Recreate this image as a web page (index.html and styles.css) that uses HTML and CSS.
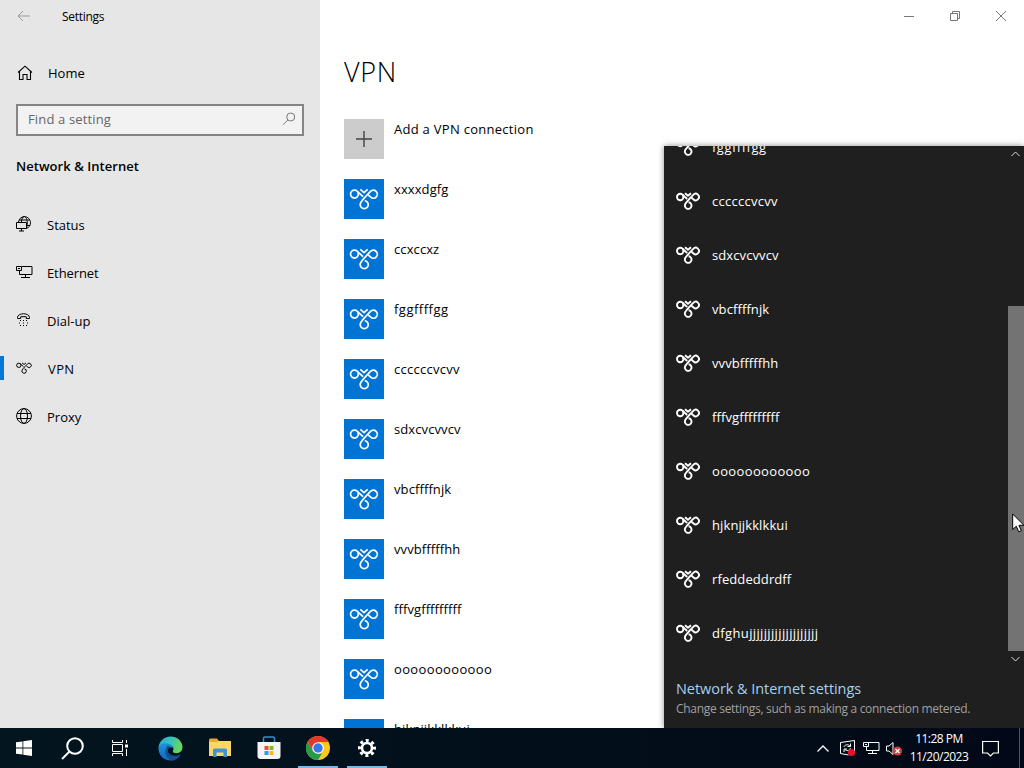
FILE: index.html
```
<!DOCTYPE html>
<html lang="en">
<head>
    <meta charset="UTF-8">
    <meta name="viewport" content="width=device-width, initial-scale=1.0">
    <title>Settings - VPN</title>
    <link rel="stylesheet" href="styles.css">
</head>
<body>
    <svg class="sprite" width="0" height="0">
        <symbol id="vpn" viewBox="0 0 24 18">
            <g fill="none" stroke="currentColor">
                <circle cx="4.2" cy="5" r="3.2"/>
                <path d="M6.500 2.700L11.200 7M9 1.200l3 2.600 3-2.600"/>
                <path d="M12.600 10.300a3.300 3.300 0 1 1-3.200 1.500C10.800 9.500 15 5.200 17.300 2.800a3.250 3.250 0 1 1 .2 4.700l-1.900-1.700"/>
            </g>
        </symbol>
        <symbol id="ethernet" viewBox="0 0 17 16">
            <path fill="none" stroke="currentColor" d="M5.500 2.500h10.500v8H3.500V6M9.500 10.500v3M5 13.500h9M.500 2.500h5v4h-5zM2 4.500h2"/>
        </symbol>
    </svg>

    <div class="desktop">
        <div class="settings">
            <aside class="sidebar">
                <div class="titlebar">
                    <svg width="14" height="12" viewBox="0 0 14 12" fill="none" stroke="#999"><path d="M13 6H1M6 1L1 6l5 5"/></svg>
                    <span class="title">Settings</span>
                </div>
                <a class="home">
                    <svg width="16" height="16" viewBox="0 0 16 16" fill="none" stroke="#000" stroke-width="1.1"><path d="M1 7.500L8 1.200l7 6.300M2.500 6.500v8H6V9.500h4v5h3.500v-8"/></svg>
                    <span>Home</span>
                </a>
                <div class="search">
                    <span>Find a setting</span>
                    <svg width="14" height="14" viewBox="0 0 14 14" fill="none" stroke="#777"><circle cx="8.700" cy="5" r="4"/><path d="M5.800 8L1 12.800"/></svg>
                </div>
                <h2>Network &amp; Internet</h2>
                <nav class="nav">
                    <a class="nav-item">
                        <svg width="16" height="16" viewBox="0 0 16 16" fill="none" stroke="#000"><path d="M2.500 6C3 3 5.300.600 8.300.600c3.500 0 6.200 2.800 6.200 6.200 0 2.800-1.500 4.800-4 5.600M3.300 4h10.500M10.500 9.500h3.500M5.500 6C5.500 3 6.700.600 8.300.600c1.700 0 3 3 3 6.200 0 2-.300 3.500-.800 4.700M.500 6.500h10v6H.500zM5.500 12.500v2.500M3 15h5"/></svg>
                        <span>Status</span>
                    </a>
                    <a class="nav-item ethernet">
                        <svg width="17" height="16"><use href="#ethernet"/></svg>
                        <span>Ethernet</span>
                    </a>
                    <a class="nav-item">
                        <svg width="16" height="16" viewBox="0 0 16 16"><path d="M1.500 5.500c0-5 12-5 12 0v1h-3.200V4.700H4.700v1.800H1.500z" fill="none" stroke="#000"/><path d="M4 8h1v1H4zM7 8h1v1H7zM10 8h1v1h-1zM3 10.500h1v1H3zM7 10.500h1v1H7zM11 10.500h1v1h-1zM4 13h1v1H4zM7 13h1v1H7zM10 13h1v1h-1z"/></svg>
                        <span>Dial-up</span>
                    </a>
                    <a class="nav-item active">
                        <svg class="vpn-small" width="16" height="12"><use href="#vpn"/></svg>
                        <span>VPN</span>
                    </a>
                    <a class="nav-item">
                        <svg width="16" height="16" viewBox="0 0 16 16" fill="none" stroke="#000"><circle cx="8" cy="8" r="7.400"/><ellipse cx="8" cy="8" rx="3.500" ry="7.400"/><path d="M1.200 5.500h13.600M1.200 10.500h13.600"/></svg>
                        <span>Proxy</span>
                    </a>
                </nav>
            </aside>

            <main class="content">
                <div class="window-buttons">
                    <svg width="10" height="10" viewBox="0 0 10 10" fill="none" stroke="#777"><path d="M0 5.500h10"/></svg>
                    <svg width="10" height="10" viewBox="0 0 10 10" fill="none" stroke="#777"><path d="M.500 2.500h7v7h-7zM2.500 2.500v-2h7v7h-2"/></svg>
                    <svg width="10" height="10" viewBox="0 0 10 10" fill="none" stroke="#777"><path d="M0 0l10 10M10 0L0 10"/></svg>
                </div>
                <h1>VPN</h1>
                <div class="connection">
                    <div class="tile tile-add"><svg width="16" height="16" viewBox="0 0 16 16" stroke="#444" stroke-width="1.300"><path d="M8 0v16M0 8h16"/></svg></div>
                    <span>Add a VPN connection</span>
                </div>
                <div class="connection"><div class="tile"><svg><use href="#vpn"/></svg></div><span class="tight">xxxxdgfg</span></div>
                <div class="connection"><div class="tile"><svg><use href="#vpn"/></svg></div><span class="tight">ccxccxz</span></div>
                <div class="connection"><div class="tile"><svg><use href="#vpn"/></svg></div><span class="loose">fggffffgg</span></div>
                <div class="connection"><div class="tile"><svg><use href="#vpn"/></svg></div><span>ccccccvcvv</span></div>
                <div class="connection"><div class="tile"><svg><use href="#vpn"/></svg></div><span class="tight">sdxcvcvvcv</span></div>
                <div class="connection"><div class="tile"><svg><use href="#vpn"/></svg></div><span class="tight">vbcffffnjk</span></div>
                <div class="connection"><div class="tile"><svg><use href="#vpn"/></svg></div><span class="tight">vvvbfffffhh</span></div>
                <div class="connection"><div class="tile"><svg><use href="#vpn"/></svg></div><span class="tight">fffvgfffffffff</span></div>
                <div class="connection"><div class="tile"><svg><use href="#vpn"/></svg></div><span class="wide">oooooooooooo</span></div>
                <div class="connection"><div class="tile"><svg><use href="#vpn"/></svg></div><span class="tight">hjknjjkklkkui</span></div>
            </main>
        </div>

        <footer class="taskbar">
            <div class="apps">
                <div class="app">
                    <svg width="16" height="16" viewBox="0 0 16 16" fill="#fff"><path d="M0 2.300L6.500 1.400v6.200H0zM7.300 1.300L16 0v7.600H7.300zM0 8.400h6.500v6.200L0 13.700zM7.300 8.400H16V16l-8.700-1.300z"/></svg>
                </div>
                <div class="app">
                    <svg width="23" height="23" viewBox="0 0 23 23" fill="none" stroke="#fff" stroke-width="2"><circle cx="14" cy="9" r="7.800"/><path d="M8.500 14.500L1 22"/></svg>
                </div>
                <div class="app task-view">
                    <svg width="17" height="16" viewBox="0 0 17 16" fill="none" stroke="#fff"><path d="M1.500 0v2.500h10V0M1.500 16v-2.500h10V16M1.500 4.500h10v7h-10zM15.500 0v3M15.500 9v7"/><path d="M14 4.500h3v3h-3z" fill="#fff" stroke="none"/></svg>
                </div>
                <div class="app">
                    <svg width="25" height="25" viewBox="0 0 25 25">
                        <defs>
                            <linearGradient id="edge-top" x1="0" y1="0" x2="1" y2=".3"><stop offset="0" stop-color="#2aa5dc"/><stop offset=".5" stop-color="#35c1c0"/><stop offset="1" stop-color="#64d85b"/></linearGradient>
                            <linearGradient id="edge-side" x1="0" y1="0" x2="0" y2="1"><stop offset="0" stop-color="#2092dc"/><stop offset="1" stop-color="#1267c4"/></linearGradient>
                        </defs>
                        <path d="M.500 12.500C.500 5.500 6 .500 12.500.500s12 4.800 12 10.500c0 4-2.700 6.200-6 6.200-2.800 0-4.300-1-3.500-2.400 1.800-3-1-6-5-6.200-4.500-.200-8.500 1.400-9.500 3.900z" fill="url(#edge-top)"/>
                        <path d="M.500 12.500c.300-4 5-6 9-5.200 3 .600 5.200 2.500 5.500 5-2-2-5-1-5.500 2-.600 4 4 7.500 8 6.500 2-.400 3.500-1.300 5-2.600-1.800 4-5.600 6.300-10 6.300C5.500 24.500.500 19 .500 12.500z" fill="url(#edge-side)"/>
                        <path d="M9.500 9.800c-4.500 5.700-1.500 12.700 4.500 14.600 3.600-.300 7-2.600 8.500-6.200-5 3.200-11.500 1.200-12.500-3-.300-2 .500-3.800 2.500-4.200-1-.900-2-1.200-3-1.200z" fill="#144f91"/>
                    </svg>
                </div>
                <div class="app">
                    <svg width="22" height="20" viewBox="0 0 22 20"><path d="M0 2q0-1.500 1.500-1.500H8L10 3h11q1 0 1 1v14H0z" fill="#e9ab2f"/><path d="M0 4h8l2-1h12v15H0z" fill="#fbd768"/><path d="M4 19v-7q0-1.500 1.500-1.500h11q1.500 0 1.500 1.500v7h-3.500v-4.500h-7V19z" fill="#4194cf"/></svg>
                </div>
                <div class="app">
                    <svg width="24" height="24" viewBox="0 0 24 24"><path d="M6.500 7V2.500Q6.500 1 8 1h8q1.500 0 1.500 1.500V7" fill="none" stroke="#3393d5" stroke-width="1.500"/><path d="M.500 6h23v14q0 3-3 3h-17q-3 0-3-3z" fill="#f4f4f4"/><path d="M7.500 10h4v4h-4z" fill="#e8512a"/><path d="M12.500 10h4v4h-4z" fill="#7db928"/><path d="M7.500 15h4v4h-4z" fill="#2b9be8"/><path d="M12.500 15h4v4h-4z" fill="#f8b81f"/></svg>
                </div>
                <div class="app running">
                    <svg width="24" height="24" viewBox="0 0 24 24"><circle cx="12" cy="12" r="12" fill="#fbc91f"/><path d="M1.600 6A12 12 0 0 1 22.400 6H12L6.800 15z" fill="#e2382d"/><path d="M1.600 6l5.200 9 5.200 3 4-.500L12 24A12 12 0 0 1 1.600 6z" fill="#269b4c"/><circle cx="12" cy="12" r="5.800" fill="#fff"/><circle cx="12" cy="12" r="4.700" fill="#3479e8"/></svg>
                </div>
                <div class="app running">
                    <svg width="18" height="18" viewBox="0 0 18 18" fill="none" stroke="#fff"><circle cx="9" cy="9" r="5" stroke-width="2.600"/><circle cx="9" cy="9" r="7.500" stroke-width="3" stroke-dasharray="3 2.890" stroke-dashoffset="1.500"/></svg>
                </div>
            </div>
            <div class="tray">
                <svg class="chevron" width="12" height="7" viewBox="0 0 12 7" fill="none" stroke="#fff" stroke-width="1.300"><path d="M.500 6.500L6 1l5.500 5.500"/></svg>
                <svg class="sync" width="17" height="17" viewBox="0 0 17 17" fill="none" stroke="#fff"><path d="M1.500 2.500l14-2v11M1.500 2.500v11l8 1.500M5 7c.500-2.500 4.500-3 6-1M11.500 3.500V6.500h-3M11.500 8c-.500 2.500-4 3.500-5.500 1.500M5 12V9h3"/><circle cx="12.500" cy="12.500" r="3.600" fill="#e8112d" stroke="none"/></svg>
                <svg class="net" width="17" height="16"><use href="#ethernet"/></svg>
                <svg class="sound" width="17" height="15" viewBox="0 0 17 15"><path d="M.500 5v5H3l4 3.500v-12L3 5z" fill="none" stroke="#fff"/><circle cx="11.500" cy="10" r="4.500" fill="#d13c3c"/><path d="M9.500 8l4 4M13.500 8l-4 4" stroke="#fff" stroke-width="1.300"/></svg>
                <div class="clock"><span class="time">11:28 PM</span><span>11/20/2023</span></div>
                <svg class="notice" width="17" height="17" viewBox="0 0 17 17" fill="none" stroke="#fff" stroke-width="1.200"><path d="M.600 1.500h15.800v11.500h-5L8.500 16l-3-3h-4.900z"/></svg>
                <div class="show-desktop"></div>
            </div>
        </footer>

        <section class="flyout">
            <div class="flyout-body">
                <div class="networks">
                    <div class="network"><svg><use href="#vpn"/></svg><span class="loose">fggffffgg</span></div>
                    <div class="network"><svg><use href="#vpn"/></svg><span>ccccccvcvv</span></div>
                    <div class="network"><svg><use href="#vpn"/></svg><span class="tight">sdxcvcvvcv</span></div>
                    <div class="network"><svg><use href="#vpn"/></svg><span class="tight">vbcffffnjk</span></div>
                    <div class="network"><svg><use href="#vpn"/></svg><span class="tight">vvvbfffffhh</span></div>
                    <div class="network"><svg><use href="#vpn"/></svg><span class="tight">fffvgfffffffff</span></div>
                    <div class="network"><svg><use href="#vpn"/></svg><span class="wide">oooooooooooo</span></div>
                    <div class="network"><svg><use href="#vpn"/></svg><span class="tight">hjknjjkklkkui</span></div>
                    <div class="network"><svg><use href="#vpn"/></svg><span class="tight">rfeddeddrdff</span></div>
                    <div class="network"><svg><use href="#vpn"/></svg><span class="wide">dfghujjjjjjjjjjjjjjjjjjj</span></div>
                </div>
                <div class="scrollbar">
                    <svg width="9" height="6" viewBox="0 0 9 6" fill="none" stroke="#ddd"><path d="M.500 5l4-4 4 4"/></svg>
                    <div class="thumb"></div>
                    <svg width="9" height="6" viewBox="0 0 9 6" fill="none" stroke="#ddd"><path d="M.500 1l4 4 4-4"/></svg>
                </div>
            </div>
            <div class="flyout-footer">
                <a class="settings-link">Network &amp; Internet settings</a>
                <p>Change settings, such as making a connection metered.</p>
            </div>
        </section>

        <svg class="cursor" width="13" height="20" viewBox="0 0 13 20"><path d="M.700 1v15.500l3.600-3.300 2.400 5.600 2.600-1.100-2.400-5.400h5z" fill="#fff" stroke="#000"/></svg>
    </div>
</body>
</html>
```

FILE: styles.css
```
* {
    box-sizing: border-box;
}

body {
    margin: 0;
    font-family: "Open Sans", "Noto Sans", sans-serif;
    font-size: 13px;
    line-height: 20px;
    color: #000;
    font-variant-ligatures: none;
    overflow: hidden;
}

svg {
    display: block;
    flex-shrink: 0;
}

.sprite {
    position: absolute;
}

.desktop {
    position: relative;
    display: flex;
    flex-direction: column;
    width: 1024px;
    height: 768px;
    overflow: hidden;
}

.settings {
    display: flex;
    height: 728px;
    overflow: hidden;
}

/* sidebar */
.sidebar {
    width: 320px;
    background: #e6e6e6;
}

.titlebar {
    display: flex;
    align-items: center;
    gap: 31px;
    height: 32px;
    padding-left: 17px;
}

.title {
    padding-top: 2px;
    font-size: 12px;
    letter-spacing: -0.3px;
}

.home {
    display: flex;
    align-items: center;
    gap: 15px;
    height: 48px;
    margin-top: 17px;
    padding-left: 17px;
}

.search {
    display: flex;
    align-items: center;
    justify-content: space-between;
    height: 32px;
    margin: 7px 16px 0;
    padding: 0 6px 2px 10px;
    border: 2px solid #858585;
    background: #f2f2f2;
    color: #666;
    letter-spacing: 0.15px;
}

h2 {
    margin: 20px 0 0 16px;
    font-size: 13px;
    line-height: 20px;
    font-weight: 600;
    letter-spacing: 0.05px;
}

.nav {
    margin-top: 25px;
}

.nav-item {
    display: flex;
    align-items: center;
    gap: 15px;
    height: 48px;
    padding-left: 16px;
}

.nav-item svg {
    margin-bottom: 2px;
}

.nav-item.ethernet {
    gap: 14px;
    letter-spacing: -0.1px;
}

.nav-item.active {
    gap: 16px;
    letter-spacing: 0.4px;
    background: linear-gradient(#0078d7, #0078d7) 0 11px / 4px 24px no-repeat;
}

.vpn-small {
    stroke-width: 1.500;
}

/* main pane */
.content {
    flex: 1;
    padding-left: 24px;
    background: #fff;
}

.window-buttons {
    display: flex;
    justify-content: flex-end;
    align-items: center;
    gap: 36px;
    height: 32px;
    padding-right: 18px;
}

h1 {
    margin: 20px 0 27px;
    font-size: 27px;
    line-height: 40px;
    font-weight: 300;
    letter-spacing: 0.7px;
}

.connection {
    display: flex;
    gap: 10px;
    height: 60px;
    letter-spacing: 0.28px;
}

/* connection names */
.tight {
    letter-spacing: 0.1px;
}

.loose {
    letter-spacing: 0.5px;
}

.wide {
    letter-spacing: 0.36px;
}

.tile {
    display: flex;
    align-items: center;
    justify-content: center;
    width: 40px;
    height: 40px;
    background: #0074d4;
    color: #fff;
}

.tile svg {
    width: 30px;
    height: 22px;
    stroke-width: 1.400;
}

.tile-add {
    background: #ccc;
}

.tile-add svg {
    width: 16px;
    height: 16px;
}

/* network flyout */
.flyout {
    position: absolute;
    top: 146px;
    right: 0;
    width: 360px;
    height: 582px;
    background: #1f1f1f;
    color: #fff;
    box-shadow: 0 0 6px rgba(0, 0, 0, 0.45);
    clip-path: inset(-8px 0 0 -8px);
}

.flyout-body {
    display: flex;
    justify-content: space-between;
    height: 521px;
}

.networks {
    display: flex;
    flex-direction: column;
    justify-content: flex-end;
    height: 514px;
    padding-left: 12px;
    overflow: hidden;
}

.network {
    display: flex;
    flex-shrink: 0;
    align-items: center;
    gap: 12px;
    height: 54px;
    letter-spacing: 0.28px;
}

.network svg {
    width: 24px;
    height: 18px;
    margin-bottom: 1px;
    stroke-width: 1.900;
}

.scrollbar {
    display: flex;
    flex-direction: column;
    align-items: center;
    width: 17px;
    padding-top: 5px;
}

.thumb {
    width: 16px;
    height: 345px;
    margin: 149px 0 5px 1px;
    background: #737373;
}

.flyout-footer {
    padding: 12px 0 0 12px;
}

.settings-link {
    display: block;
    font-size: 14.500px;
    line-height: 20px;
    letter-spacing: -0.06px;
    color: #a3d0f2;
}

.flyout-footer p {
    margin: 1px 0 0;
    font-size: 12px;
    line-height: 18px;
    letter-spacing: -0.3px;
    color: #a0a0a0;
}

.cursor {
    position: absolute;
    left: 1012px;
    top: 513px;
}

/* taskbar */
.taskbar {
    display: flex;
    justify-content: space-between;
    height: 40px;
    background: linear-gradient(90deg, #03151f, #020e19 60%, #020817);
    color: #fff;
}

.apps,
.tray {
    display: flex;
    align-items: center;
    height: 40px;
}

.apps {
    margin-left: -1px;
}

.app {
    display: flex;
    align-items: center;
    justify-content: center;
    width: 49px;
    height: 40px;
}

.task-view {
    padding-right: 4px;
}

.running {
    background: linear-gradient(#76b9ed, #76b9ed) 50% 100% / 40px 2px no-repeat;
}

.chevron {
    margin-right: 10px;
}

.sync {
    margin-right: 7px;
}

.net {
    margin-right: 6px;
}

.sound {
    margin-right: 6px;
}

.clock {
    display: flex;
    flex-direction: column;
    align-items: center;
    width: 60px;
    font-size: 12px;
    line-height: 18px;
    letter-spacing: -0.500px;
}

.notice {
    margin: 0 20px 0 13px;
}

.show-desktop {
    width: 5px;
    height: 40px;
    border-left: 1px solid #4c5562;
}
```
